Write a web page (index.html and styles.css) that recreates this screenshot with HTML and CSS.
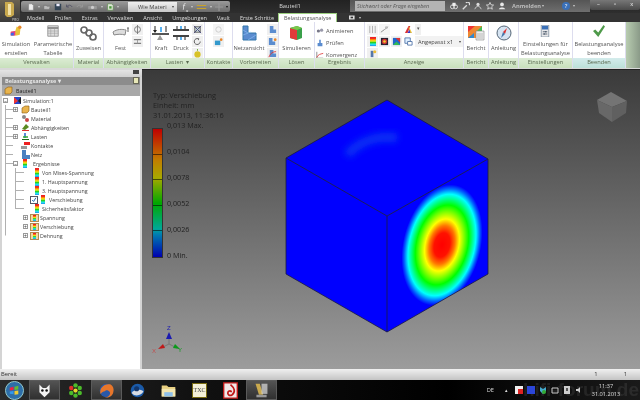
FILE: index.html
```html
<!DOCTYPE html>
<html lang="de">
<head>
<meta charset="utf-8">
<title>Bauteil1</title>
<link rel="stylesheet" href="styles.css">
</head>
<body>
<div class="app">
  <div class="logo"><svg viewBox="0 0 20 22" class="logo-i"><path d="M5 2h7l2 2v11l-3 2H7l-2-2z" fill="#c9a94e"/><path d="M8 4h3v11H8z" fill="#f3e2a8"/></svg><span class="pro">PRO</span></div>

  <header class="titlebar">
    <div class="qat">
      <svg class="q" viewBox="0 0 10 10"><path d="M2 1h4l2 2v6H2z" fill="#eee" stroke="#777" stroke-width=".6"/></svg><i class="dd"></i>
      <svg class="q" viewBox="0 0 10 10"><path d="M1 3h3l1 1h4l-1 4H1z" fill="#bbb" stroke="#666" stroke-width=".6"/></svg>
      <svg class="q" viewBox="0 0 10 10"><path d="M1 1h8v8H1z" fill="#345"/><path d="M3 1h4v3H3z" fill="#eef"/></svg>
      <svg class="q" viewBox="0 0 10 10"><path d="M2 5c2-3 5-3 7 0M2 5V2M2 5h3" fill="none" stroke="#556" stroke-width="1.2"/></svg>
      <svg class="q" viewBox="0 0 10 10"><path d="M8 5C6 2 3 2 1 5M8 5V2M8 5H5" fill="none" stroke="#999" stroke-width="1.2"/></svg>
      <svg class="q q-wide" viewBox="0 0 14 10"><path d="M1 3h12v5H1z" fill="#999" stroke="#777" stroke-width=".6"/><circle cx="7" cy="5.5" r="2" fill="#ccc"/></svg><i class="dd"></i>
      <svg class="q" viewBox="0 0 10 10"><path d="M2 1h5l2 2v6H2z" fill="#dfe8d8" stroke="#5a8a4a" stroke-width=".8"/><path d="M4 4h3v3H4z" fill="#4a9a3a"/></svg><i class="dd"></i>
      <span class="material">Wie Materi<i class="dd dd-dark"></i></span>
      <span class="fx">ƒ<sub>x</sub></span><i class="dd"></i>
      <svg class="q q-wide" viewBox="0 0 14 10"><path d="M1 3h12M1 7h12" stroke="#c9a227" stroke-width="1.4"/></svg><i class="dd"></i>
      <svg class="q" viewBox="0 0 10 10"><path d="M5 0v10M0 5h10" stroke="#999" stroke-width="1.4"/></svg><i class="dd dd-black"></i>
    </div>
    <div class="doc-title">Bauteil1</div>
    <div class="help">
      <span class="search">Stichwort oder Frage eingeben</span>
      <span class="help-ico">
        <svg class="h" viewBox="0 0 10 10"><circle cx="3" cy="6" r="2.4" fill="none" stroke="#eee"/><circle cx="7" cy="6" r="2.4" fill="none" stroke="#eee"/><path d="M3 1h4v4H3z" fill="#eee"/></svg>
        <svg class="h" viewBox="0 0 10 10"><path d="M1 9l5-5M5 1a2.5 2.5 0 0 1 4 3" stroke="#ddd" stroke-width="1.6" fill="none"/></svg>
        <svg class="h" viewBox="0 0 10 10"><circle cx="5" cy="3" r="2" fill="#ddd"/><path d="M1 9c2-5 6-5 8 0" stroke="#ddd" fill="none"/></svg>
        <svg class="h" viewBox="0 0 10 10"><path d="M5 .5l1.3 3 3.2.3-2.4 2.1.8 3.1L5 7.3 2.100 9l.8-3.100L.5 3.800l3.200-.3z" fill="none" stroke="#eee" stroke-width=".9"/></svg>
        <svg class="h" viewBox="0 0 10 10"><circle cx="5" cy="3" r="2.300" fill="#e8e8e8"/><path d="M1 9c1-3 7-3 8 0z" fill="#e8e8e8"/></svg>
      </span>
      <span class="login">Anmelden</span><i class="dd"></i>
      <span class="q-help">?</span><i class="dd"></i>
    </div>
    <div class="winctl"><span>–</span><span>▫</span><span>x</span></div>
  </header>

  <nav class="tabs">
    <span>Modell</span><span>Prüfen</span><span>Extras</span><span>Verwalten</span><span>Ansicht</span><span>Umgebungen</span><span>Vault</span><span>Erste Schritte</span>
    <span class="tab-on">Belastungsanalyse</span>
    <svg class="tab-ico" viewBox="0 0 10 6"><rect width="7" height="5" y=".5" fill="#ddd"/><rect x="2" y="2" width="3" height="2" fill="#333"/></svg><i class="dd"></i>
  </nav>

  <section class="ribbon">
    <div class="panel p-verwalten"><div class="pbody">
      <div class="big b-sim"><svg class="ic" viewBox="0 0 18 16"><path d="M2 14V9l6-1 2-6 5 2-1 9-4 1z" fill="#e8c23a"/><path d="M2 14V9l6-1v6z" fill="#e83a8a"/><path d="M2 14v-3l4-1v4z" fill="#3a6ae8"/><circle cx="14" cy="3" r="2.300" fill="#e8862a"/></svg><span>Simulation<br>erstellen</span></div>
      <div class="big b-par"><svg class="ic" viewBox="0 0 18 16"><path d="M2 1h14v14H2z" fill="#ddd" stroke="#888"/><path d="M2 4h14" stroke="#777" stroke-width="2"/><path d="M6 5v10M11 5v10M2 8h14M2 11h14" stroke="#999" stroke-width=".7"/></svg><span>Parametrische<br>Tabelle</span></div>
    </div><div class="ptitle">Verwalten</div></div>

    <div class="panel p-material"><div class="pbody">
      <div class="big"><svg class="ic" viewBox="0 0 18 16"><g fill="none" stroke="#666" stroke-width="1.700"><circle cx="5" cy="5" r="3"/><circle cx="10" cy="8" r="3"/><circle cx="14" cy="12" r="3"/></g></svg><span>Zuweisen</span></div>
    </div><div class="ptitle">Material</div></div>

    <div class="panel p-abh"><div class="pbody">
      <div class="big b-fest"><svg class="ic" viewBox="0 0 18 16"><path d="M1 7c4-3 9-3 13-2l-1 5c-3-1-7-1-11 0z" fill="#ddd" stroke="#888"/><path d="M15 3h2M16 3v4" stroke="#666"/></svg><span>Fest</span></div>
      <div class="stack">
        <b class="sq"><svg viewBox="0 0 10 10"><circle cx="5" cy="5" r="3.300" fill="none" stroke="#777"/><path d="M5 0v10" stroke="#777"/></svg></b>
        <b class="sq"><svg viewBox="0 0 10 10"><path d="M1 3h8M1 7h8" stroke="#555"/><path d="M5 3v4" stroke="#999"/></svg></b>
      </div>
    </div><div class="ptitle">Abhängigkeiten</div></div>

    <div class="panel p-lasten"><div class="pbody">
      <div class="big b-load"><svg class="ic" viewBox="0 0 18 16"><path d="M3 1v6M14 1v6" stroke="#222"/><path d="M1 5l2 3 2-3z" fill="#222"/><path d="M9 2v5" stroke="#29e" stroke-width="1.500"/><path d="M0 9h17" stroke="#555" stroke-width="2"/><path d="M5 15l3-5 3 5z" fill="#999"/></svg><span>Kraft</span></div>
      <div class="big b-load"><svg class="ic" viewBox="0 0 18 16"><path d="M1 5h16M1 11h16" stroke="#444" stroke-width="2"/><path d="M5 1v3M5 12v3M13 1v3M13 12v3" stroke="#222"/><path d="M9 1v3M9 12v3" stroke="#29e" stroke-width="1.500"/></svg><span>Druck</span></div>
      <div class="stack">
        <b class="sq"><svg viewBox="0 0 10 10"><path d="M2 2h6v6H2z" fill="#cdd" stroke="#555"/><path d="M1 1l8 8M9 1L1 9" stroke="#447"/></svg></b>
        <b class="sq"><svg viewBox="0 0 10 10"><path d="M8 5a3.300 3.300 0 1 1-2-3" fill="none" stroke="#555"/><path d="M5 1l2 1-1 2z" fill="#555"/></svg></b>
        <b class="sq"><svg viewBox="0 0 10 10"><circle cx="5" cy="6" r="3.500" fill="#d8c227"/><path d="M5 2V0" stroke="#6a3"/></svg></b>
      </div>
    </div><div class="ptitle">Lasten &nbsp;▾</div></div>

    <div class="panel p-kontakte"><div class="pbody">
      <div class="stack">
        <b class="sq sq-off"><svg viewBox="0 0 10 10"><circle cx="5" cy="5" r="3" fill="none" stroke="#ccc"/></svg></b>
        <b class="sq"><svg viewBox="0 0 10 10"><path d="M1 4h6v5H1z" fill="#39c"/><circle cx="8" cy="3" r="1.500" fill="#e8862a"/></svg></b>
      </div>
    </div><div class="ptitle">Kontakte</div></div>

    <div class="panel p-vorb"><div class="pbody">
      <div class="big b-netz"><svg class="ic" viewBox="0 0 18 16"><path d="M3 1h5v7h8v7H3z" fill="#5b8ccf" stroke="#37a"/><path d="M3 5l5 3M3 10l8-3M8 15l8-5" stroke="#9cf" stroke-width=".5"/></svg><span>Netzansicht</span></div>
      <div class="stack">
        <b class="sq"><svg viewBox="0 0 10 10"><path d="M2 1h4v4h3v4H2z" fill="#5b8ccf"/></svg></b>
        <b class="sq"><svg viewBox="0 0 10 10"><path d="M1 1h4v4h3v4H1z" fill="#5b8ccf"/><circle cx="8" cy="3" r="1.500" fill="#e8862a"/></svg></b>
        <b class="sq"><svg viewBox="0 0 10 10"><path d="M2 1h4v4h3v4H2z" fill="#5b8ccf"/><path d="M1 9c2-5 5-6 8-6" stroke="#d33" fill="none"/></svg></b>
      </div>
    </div><div class="ptitle">Vorbereiten</div></div>

    <div class="panel p-loesen"><div class="pbody">
      <div class="big"><svg class="ic" viewBox="0 0 18 16"><path d="M3 3l7-2 5 2v10l-5 2-7-2z" fill="#3aa04a"/><path d="M3 3l7 2v10l-7-2z" fill="#e23a3a"/><path d="M3 3l7-2 5 2-5 2z" fill="#7bc84a"/></svg><span>Simulieren</span></div>
    </div><div class="ptitle">Lösen</div></div>

    <div class="panel p-ergebnis"><div class="pbody">
      <ul class="rows">
        <li><svg viewBox="0 0 10 10"><circle cx="3" cy="5" r="2" fill="#778"/><circle cx="7" cy="4" r="2" fill="#99a"/></svg>Animieren</li>
        <li><svg viewBox="0 0 10 10"><path d="M4 1h2v4h2v4H2V5h2z" fill="#5b8ccf"/></svg>Prüfen</li>
        <li><svg viewBox="0 0 10 10"><path d="M1 1v8h8" stroke="#777" fill="none"/><path d="M1 8c2-4 4-4 8-5" stroke="#d33" fill="none"/></svg>Konvergenz</li>
      </ul>
    </div><div class="ptitle">Ergebnis</div></div>

    <div class="panel p-anzeige"><div class="pbody">
      <div class="azgrid">
        <b class="sq sq-off"><svg viewBox="0 0 10 10"><path d="M2 1v8M5 1v8M8 1v8" stroke="#aaa"/></svg></b>
        <b class="sq sq-off"><svg viewBox="0 0 10 10"><path d="M1 8l4-3 4-3" stroke="#888"/><circle cx="7" cy="3" r="1.500" fill="#bbb"/></svg></b>
        <span class="gap"></span>
        <b class="sq sq-plain"><svg viewBox="0 0 10 10"><path d="M1 9l4-8h2l-3 8z" fill="#d33"/><path d="M5 1l4 8H6z" fill="#e8c23a"/><path d="M4 9l2-4 1 4z" fill="#33c"/></svg></b>
        <b class="sq sq-tiny">▾</b>
        <span class="gap gap2"></span>
        <b class="sq"><i class="rb rb-wide"></i></b>
        <b class="sq"><svg viewBox="0 0 10 10"><path d="M1 1h8v8H1z" fill="#223"/><circle cx="5" cy="5" r="3" fill="#c33"/><circle cx="5" cy="5" r="1.500" fill="#ec3"/></svg></b>
        <b class="sq"><svg viewBox="0 0 10 10"><path d="M1 1h8v8H1z" fill="#26c"/><path d="M4 1h5v5z" fill="#d33"/><path d="M1 9l4-4 4 4z" fill="#3b5"/></svg></b>
        <b class="sq sq-plain"><svg viewBox="0 0 10 10"><path d="M1 1h6v6H1z" fill="#def" stroke="#57a"/><path d="M4 5h5v4H4z" fill="#fff" stroke="#57a"/></svg></b>
        <span class="combo">Angepasst x1<i class="dd dd-dark"></i></span>
        <b class="sq"><svg viewBox="0 0 10 10"><path d="M3 2h3v7H3z" fill="#57a"/><circle cx="7.500" cy="3" r="1.700" fill="#eb3"/></svg></b>
      </div>
    </div><div class="ptitle">Anzeige</div></div>

    <div class="panel p-bericht"><div class="pbody">
      <div class="big"><svg class="ic" viewBox="0 0 18 16"><path d="M1 1h14v12H1z" fill="#e83"/><path d="M1 1h7l-7 6z" fill="#e33"/><path d="M15 1v6H9z" fill="#4b5"/><path d="M1 13l6-5v5z" fill="#38c"/><path d="M9 6h8v9H9z" fill="#eee" stroke="#888" stroke-width=".6"/><path d="M10 9h6M10 11h6M10 13h6" stroke="#999" stroke-width=".6"/></svg><span>Bericht</span></div>
    </div><div class="ptitle">Bericht</div></div>

    <div class="panel p-anleitung"><div class="pbody">
      <div class="big"><svg class="ic" viewBox="0 0 18 16"><circle cx="9" cy="8" r="7" fill="#d6e4f2" stroke="#567"/><path d="M12 3L8 7l2 2z" fill="#d33"/><path d="M6 13l2-6 2 2z" fill="#47a"/></svg><span>Anleitung</span></div>
    </div><div class="ptitle">Anleitung</div></div>

    <div class="panel p-einst"><div class="pbody">
      <div class="big"><svg class="ic" viewBox="0 0 18 16"><path d="M4 0h10v16H4z" fill="#e8e8ea" stroke="#789"/><path d="M5 1h8v5H5z" fill="#3a70b8"/><path d="M6 9h6M6 12h6" stroke="#345"/><path d="M10 8v2M8 11v2" stroke="#345"/></svg><span>Einstellungen für<br>Belastungsanalyse</span></div>
    </div><div class="ptitle">Einstellungen</div></div>

    <div class="panel p-beenden"><div class="pbody">
      <div class="big"><svg class="ic" viewBox="0 0 18 16"><path d="M1 8l3-2 4 4 7-10 2 2-9 14z" fill="#4f9a4a"/></svg><span>Belastungsanalyse<br>beenden</span></div>
    </div><div class="ptitle ptitle-end">Beenden</div></div>

    <div class="ribbon-rest"></div>
  </section>
  <div class="rule"></div>

  <main class="main">
    <aside class="side">
      <div class="side-strip"><b class="side-btn"></b></div>
      <div class="side-head">Belastungsanalyse ▾<b class="side-ico"></b></div>
      <div class="side-root"><svg class="ti" viewBox="0 0 9 9"><path d="M1 3l3-2h4v5L6 8H1z" fill="#e9b44c" stroke="#8a5a10" stroke-width=".6"/></svg>Bauteil1</div>
      <ul class="tree">
        <li class="r l0"><i class="box">–</i><svg class="ti" viewBox="0 0 9 9"><path d="M1 1h7v7H1z" fill="#24c"/><path d="M1 1l4 4-4 3z" fill="#e33"/><path d="M8 1L5 5l3 3z" fill="#222"/></svg>Simulation:1</li>
        <li class="r l1"><i class="box">+</i><svg class="ti" viewBox="0 0 9 9"><path d="M1 3l3-2h4v5L6 8H1z" fill="#e9b44c" stroke="#8a5a10" stroke-width=".6"/></svg>Bauteil1</li>
        <li class="r l1 noplus"><svg class="ti" viewBox="0 0 9 9"><circle cx="3" cy="3" r="2" fill="#888"/><circle cx="6" cy="6" r="2" fill="#c44"/></svg>Material</li>
        <li class="r l1"><i class="box">+</i><svg class="ti" viewBox="0 0 9 9"><path d="M1 6l4-5 3 3-4 3z" fill="#5a8a20"/><path d="M1 7h7v1H1z" fill="#d33"/></svg>Abhängigkeiten</li>
        <li class="r l1"><i class="box">+</i><svg class="ti" viewBox="0 0 9 9"><path d="M1 7h7v1H1z" fill="#1a6a1a"/><path d="M4 1v5" stroke="#26c" stroke-width="1.500"/><path d="M2 5h5" stroke="#3a3" stroke-width="1.500"/></svg>Lasten</li>
        <li class="r l1 noplus"><svg class="ti" viewBox="0 0 9 9"><path d="M3 1h6v3H3z" fill="#e22"/><path d="M0 5h6v3H0z" fill="#999"/></svg>Kontakte</li>
        <li class="r l1 noplus"><svg class="ti" viewBox="0 0 9 9"><path d="M1 0h4v5h4v4H1z" fill="#4a80c0"/></svg>Netz</li>
        <li class="r l1 open"><i class="box">–</i><i class="rb"></i>Ergebnisse</li>
        <li class="r l2"><i class="rb"></i>Von Mises-Spannung</li>
        <li class="r l2"><i class="rb"></i>1. Hauptspannung</li>
        <li class="r l2"><i class="rb"></i>3. Hauptspannung</li>
        <li class="r l2 checked"><i class="chk"><svg viewBox="0 0 8 8"><path d="M1.500 4l2 2 3-5" fill="none" stroke="#26a" stroke-width="1.300"/></svg></i><i class="rb"></i>Verschiebung</li>
        <li class="r l2 last"><i class="rb"></i>Sicherheitsfaktor</li>
        <li class="r l3"><i class="box">+</i><i class="fold"><i class="rb rb-mini"></i></i>Spannung</li>
        <li class="r l3"><i class="box">+</i><i class="fold"><i class="rb rb-mini"></i></i>Verschiebung</li>
        <li class="r l3 end"><i class="box">+</i><i class="fold"><i class="rb rb-mini"></i></i>Dehnung</li>
      </ul>
    </aside>

    <div class="view">
      <svg class="scene" viewBox="0 0 498 299">
        <defs>
          <radialGradient id="heat" gradientUnits="userSpaceOnUse" cx="0" cy="0" r="44" gradientTransform="matrix(.92 -.3 0 1.340 442 245)">
            <stop offset="0" stop-color="#f00"/><stop offset=".2" stop-color="#f10"/><stop offset=".32" stop-color="#f70"/><stop offset=".43" stop-color="#ff0"/><stop offset=".66" stop-color="#0f0"/><stop offset=".84" stop-color="#0ff"/><stop offset=".93" stop-color="#06f"/><stop offset="1" stop-color="#00f"/>
          </radialGradient>
          <filter id="soft" x="-50%" y="-50%" width="200%" height="200%"><feGaussianBlur stdDeviation="3.500"/></filter>
        </defs>
        <g transform="translate(-142 -70)">
          <path d="M387 100L488 159 387 216 286 158z" fill="#00f"/>
          <path d="M347 155C358 143 375 135 397 138" fill="none" stroke="#0a40f0" stroke-width="9" opacity=".8" filter="url(#soft)"/>
          <path d="M286 158L387 216V332L286 274z" fill="#00f"/>
          <path d="M387 216L488 159V274L387 332z" fill="url(#heat)"/>
          <path d="M387 100L488 159V274L387 332 286 274V158zM286 158L387 216 488 159M387 216V332" fill="none" stroke="#1a1a40" stroke-width=".8"/>
          <path d="M611 92L627 101 612 107 597 100z" fill="#747474"/>
          <path d="M597 100L612 107V122L599 113z" fill="#686868"/>
          <path d="M627 101L626 113 612 122V107z" fill="#606060"/>
          <path d="M169 344V336M169 344L161 348M169 344L177 348" stroke="#777" stroke-width="1"/>
          <path d="M169 332l3 7h-6z" fill="#1a1ab0"/>
          <path d="M158 349l5-5 2 4z" fill="#c01818"/>
          <path d="M180 349l-5-5-2 4z" fill="#0a9a1a"/>
        </g>
        <text class="tri tri-z" x="25" y="260">Z</text>
        <text class="tri tri-x" x="10" y="283">X</text>
        <text class="tri tri-y" x="36" y="282">Y</text>
      </svg>
      <div class="legend">
        <div class="leg-head">Typ: Verschiebung<br>Einheit: mm<br>31.01.2013, 11:36:16</div>
        <div class="leg-body">
          <div class="leg-bar"><i></i><i></i><i></i><i></i><i></i></div>
          <div class="leg-labels"><span>0,013 Max.</span><span>0,0104</span><span>0,0078</span><span>0,0052</span><span>0,0026</span><span>0 Min.</span></div>
        </div>
      </div>
    </div>
  </main>

  <div class="status"><span>Bereit</span><span class="st-r"><span>1</span><span>1</span></span></div>

  <footer class="taskbar">
    <div class="tb-icons">
      <b class="tb tb-orb"><svg viewBox="0 0 20 20"><circle cx="10" cy="10" r="9.500" fill="#2d6ea8"/><circle cx="10" cy="10" r="9.500" fill="none" stroke="#9cc"/><path d="M5 7l4-1v3.500l-4 .5z" fill="#e24"/><path d="M10 6l4-1v4l-4 .5z" fill="#6b3"/><path d="M5 11l4-.5V14l-4-.5z" fill="#39e"/><path d="M10 10.500l4-.5v4l-4 .5z" fill="#ec3"/></svg></b>
      <b class="tb tb-on"><svg viewBox="0 0 20 20"><path d="M4 3l4 4h4l4-4v9l-6 6-6-6z" fill="#f4f4f4"/><circle cx="7.500" cy="10" r="1.500" fill="#111"/><circle cx="12.500" cy="10" r="1.500" fill="#111"/></svg></b>
      <b class="tb"><svg viewBox="0 0 20 20"><g fill="#4cbb2a"><circle cx="10" cy="4" r="2.600"/><circle cx="15" cy="7" r="2.600"/><circle cx="15" cy="13" r="2.600"/><circle cx="10" cy="16" r="2.600"/><circle cx="5" cy="13" r="2.600"/></g><circle cx="5" cy="7" r="2.600" fill="#e0302a"/><circle cx="10" cy="10" r="2.500" fill="#e8d82a"/></svg></b>
      <b class="tb tb-on"><svg viewBox="0 0 20 20"><circle cx="10" cy="10" r="8" fill="#2a58a8"/><path d="M3 14C1 7 8 1 15 3c3 2 4 5 3 9-1 5-6 7-10 6 4 0 7-3 6-6-2-3-5-3-6-1-2 0-3 1-5 3z" fill="#e8762a"/></svg></b>
      <b class="tb"><svg viewBox="0 0 20 20"><circle cx="10" cy="10" r="8" fill="#1a5aa8"/><path d="M3 13c3-4 9-5 14-2-2 5-10 7-14 2z" fill="#d8dce4"/><circle cx="9" cy="8" r="3" fill="#12356a"/></svg></b>
      <b class="tb"><svg viewBox="0 0 20 20"><path d="M2 4h6l2 2h8v11H2z" fill="#e8cf80"/><path d="M2 8h16v9H2z" fill="#f4e7b0"/><path d="M5 12h10v5H5z" fill="#8fc0e8"/></svg></b>
      <b class="tb"><span class="txc">TXC</span></b>
      <b class="tb"><svg viewBox="0 0 20 20"><path d="M2 1h16v18H2z" fill="#f0e8e8" stroke="#c01818" stroke-width="1.600"/><path d="M10 3c5 4 6 9 2 12-3 2-6 0-5-3 1-2 4-2 4 0" fill="none" stroke="#c01818" stroke-width="2"/></svg></b>
      <b class="tb tb-on"><svg viewBox="0 0 20 20"><path d="M3 2h5l4 13H7z" fill="#c9a94e"/><path d="M10 2h7v12h-7z" fill="#ddd" opacity=".7"/><path d="M4 15h12v3H4z" fill="#999"/></svg></b>
    </div>
    <div class="tray">
      <span class="lang">DE</span><span class="arrow">▴</span>
      <svg class="ty" viewBox="0 0 8 8"><rect width="8" height="8" fill="#eee"/><rect x="3" y="3" width="5" height="5" fill="#d22"/></svg>
      <svg class="ty" viewBox="0 0 8 8"><rect width="8" height="8" fill="#2c46d8"/></svg>
      <svg class="ty" viewBox="0 0 8 8"><path d="M1 1l3 2 3-2v4L4 8 1 5z" fill="#4ac"/><circle cx="5" cy="6" r="2" fill="#3a3"/></svg>
      <svg class="ty" viewBox="0 0 8 8"><path d="M1 2h6v5H1z" fill="none" stroke="#ccc"/></svg>
      <svg class="ty" viewBox="0 0 8 8"><path d="M1 0h6v8H1z" fill="#ccc"/><path d="M3 2h2v3H3z" fill="#555"/></svg>
      <svg class="ty" viewBox="0 0 8 8"><path d="M1 3h2l2-2v6L3 5H1z" fill="#ccc"/></svg>
      <span class="clock">11:37<br>31.01.2013</span>
    </div>
    <span class="watermark">hifi-forum.de</span>
  </footer>
</div>
</body>
</html>
```

FILE: styles.css
```css
* { box-sizing: border-box; }
html, body { margin: 0; padding: 0; background: #000; }
i, b { font-style: normal; font-weight: normal; display: block; }
ul { list-style: none; margin: 0; padding: 0; }
svg { display: block; }

.app {
  position: relative;
  width: 640px;
  height: 400px;
  overflow: hidden;
  display: flex;
  flex-direction: column;
  font: 5.700px/8px "Open Sans", sans-serif;
  color: #555;
  filter: blur(.3px);
}

.logo {
  position: absolute;
  left: 0;
  top: 0;
  width: 20px;
  height: 22px;
  background: linear-gradient(#6a6252, #3a3a3a);
}
.logo-i { width: 20px; height: 22px; }
.pro {
  position: absolute;
  right: 1px;
  bottom: 0;
  font-size: 3.500px;
  line-height: 4px;
  color: #ccc;
}

.titlebar {
  height: 13px;
  flex: none;
  display: flex;
  background: linear-gradient(#222, #2e2e2e);
  padding-left: 21px;
}
.qat {
  width: 209px;
  height: 11px;
  margin-top: 1px;
  display: flex;
  align-items: center;
  gap: 3px;
  padding-left: 6px;
  background: linear-gradient(#9a9a9a, #6c6c6c);
  border-radius: 2px;
}
.q { width: 8px; height: 8px; flex: none; }
.q-wide { width: 11px; }
.dd {
  flex: none;
  width: 0;
  height: 0;
  border-left: 1.500px solid transparent;
  border-right: 1.500px solid transparent;
  border-top: 2px solid #ccc;
}
.dd-dark { border-top-color: #444; }
.dd-black { border-top-color: #111; }
.material {
  width: 49px;
  height: 10px;
  margin-left: 6px;
  display: flex;
  align-items: center;
  justify-content: space-between;
  padding: 0 3px 0 10px;
  background: linear-gradient(#f0f0f0, #c8c8c8);
  color: #444;
  flex: none;
}
.fx { color: #eee; font: italic 8px/8px "Liberation Serif", serif; margin-left: 2px; }
.fx sub { font-size: 5px; line-height: 0; }
.doc-title {
  width: 120px;
  text-align: center;
  color: #d8d8d8;
  line-height: 13px;
  flex: none;
}
.help {
  width: 240px;
  height: 12px;
  flex: none;
  display: flex;
  align-items: center;
  background: linear-gradient(#555, #6e6e6e);
  padding-left: 5px;
  gap: 3px;
}
.search {
  width: 90px;
  height: 10px;
  flex: none;
  background: #b4b4b4;
  color: #555;
  font-style: italic;
  font-size: 5.400px;
  line-height: 10px;
  padding-left: 2px;
  white-space: nowrap;
}
.help-ico { display: flex; gap: 4px; margin-left: 2px; }
.h { width: 8px; height: 8px; }
.login { color: #bbb; font-weight: 700; margin-left: 3px; width: 27px; }
.q-help {
  width: 8px;
  height: 8px;
  margin-left: 15px;
  border-radius: 50%;
  background: #3a70b8;
  color: #fff;
  font-size: 6px;
  text-align: center;
}
.winctl {
  flex: 1;
  display: flex;
  height: 10px;
  background: linear-gradient(#777, #4a4a4a);
  border-radius: 0 0 2px 2px;
}
.winctl span { flex: 1; text-align: center; color: #eee; line-height: 9px; }

.tabs {
  height: 9px;
  flex: none;
  display: flex;
  align-items: center;
  gap: 10px;
  padding-left: 27px;
  background: #333;
  color: #ddd;
}
.tabs span { font-size: 5.500px; }
.tabs .tab-on {
  margin-left: -6px;
  height: 9px;
  padding: 0 5px;
  background: #fff;
  color: #555;
  border: 1px solid #9ccf80;
  border-bottom: 0;
  line-height: 8px;
}
.tab-ico { width: 8px; height: 5px; margin-left: 2px; }
.tabs .dd { margin-left: -8px; }

.ribbon { height: 46px; flex: none; display: flex; background: #fff; }
.rule {
  height: 2px;
  flex: none;
  background: linear-gradient(#222, #222) 142px 1px / 100% 1px no-repeat, #d8d8d8;
}
.panel {
  flex: none;
  display: flex;
  flex-direction: column;
  border-right: 1px solid #dde;
}
.pbody {
  flex: 1;
  display: flex;
  justify-content: center;
  gap: 2px;
  padding-top: 2px;
  min-height: 0;
}
.ptitle {
  height: 10px;
  flex: none;
  text-align: center;
  line-height: 9px;
  color: #5a6a50;
  background: linear-gradient(#dcecd4, #c8e0bc);
  white-space: nowrap;
}
.ptitle-end { background: linear-gradient(#d4ecec, #bce0d8); }
.p-verwalten { width: 74px; }
.p-material { width: 30px; }
.p-abh { width: 47px; }
.p-lasten { width: 54px; }
.p-kontakte { width: 28px; }
.p-vorb { width: 46px; }
.p-loesen { width: 36px; }
.p-ergebnis { width: 50px; }
.p-anzeige { width: 99px; }
.p-bericht { width: 25px; }
.p-anleitung { width: 30px; }
.p-einst { width: 54px; }
.p-beenden { width: 53px; }
.ribbon-rest { flex: 1; background: linear-gradient(90deg, #b8ccb0, #8a9a88); }

.big {
  display: flex;
  flex-direction: column;
  align-items: center;
  text-align: center;
  white-space: nowrap;
}
.big span { margin-top: 3px; line-height: 9px; }
.ic { width: 18px; height: 16px; margin-top: 1px; }
.b-sim { width: 31px; }
.b-par { width: 39px; }
.stack { display: flex; flex-direction: column; gap: 1px; }
.sq {
  width: 11px;
  height: 11px;
  padding: 1px;
  background: #f0f0f0;
  flex: none;
}
.sq-off { background: #f4f4f4; }
.sq-plain { background: none; }
.sq-tiny { width: 6px; font-size: 5px; line-height: 9px; padding: 0; text-align: center; }
.rows { width: 47px; padding-top: 1px; }
.rows li { display: flex; align-items: center; gap: 2px; height: 12px; white-space: nowrap; }
.rows svg { width: 8px; height: 8px; flex: none; }
.azgrid { display: flex; flex-wrap: wrap; width: 98px; gap: 1px; align-content: flex-start; padding-left: 2px; }
.gap { width: 11px; }
.gap2 { width: 40px; }
.combo {
  width: 48px;
  height: 11px;
  padding: 0 2px 0 3px;
  display: flex;
  align-items: center;
  justify-content: space-between;
  background: #f2f2f2;
  color: #444;
  white-space: nowrap;
}

.rb {
  flex: none;
  width: 4px;
  height: 9px;
  background: linear-gradient(#e22 0, #e22 15%, #f90 30%, #ee2 45%, #2c2 62%, #2ee 80%, #28e 100%);
}
.rb-wide { width: 6px; height: 9px; margin: 0 auto; }
.rb-mini { width: 3px; height: 6px; margin: 0 auto; }

.main { flex: 1; display: flex; min-height: 0; background: #bbb; }
.side {
  width: 142px;
  flex: none;
  display: flex;
  flex-direction: column;
  background: #d4d4d4;
  padding: 0 2px;
}
.side-strip { height: 7px; flex: none; position: relative; margin: 0 -2px; background: linear-gradient(#e4e4e4, #d0d0d0); }
.side-btn { position: absolute; right: 3px; top: 0; width: 6px; height: 4px; background: #444; }
.side-head {
  height: 8px;
  flex: none;
  display: flex;
  justify-content: space-between;
  padding-left: 3px;
  background: #8c8c8c;
  color: #e8e8e8;
  font-weight: 700;
  font-size: 5.500px;
}
.side-ico { width: 6px; height: 7px; background: #e8e8b8; border: 1px solid #665; margin-right: 1px; }
.side-root {
  height: 11px;
  flex: none;
  display: flex;
  align-items: center;
  gap: 2px;
  padding-left: 2px;
  background: #a8a8a8;
  color: #222;
  font-size: 5.400px;
}
.tree { flex: 1; background: #fff; color: #444; font-size: 5.300px; }
.r {
  height: 9px;
  display: flex;
  align-items: center;
  white-space: nowrap;
  --line: #b0b0b0;
  background-repeat: no-repeat;
}
.ti { width: 9px; height: 9px; flex: none; margin-right: 1px; }
.box {
  flex: none;
  width: 5px;
  height: 5px;
  font-size: 5px;
  line-height: 4px;
  text-align: center;
  border: 1px solid #999;
  background: #fff;
  color: #333;
  margin-right: 2px;
}
.l0 { padding-left: 1px; }
.l0 .box { margin-right: 5px; }
.l1 {
  padding-left: 11px;
  background-image: linear-gradient(var(--line), var(--line)), linear-gradient(var(--line), var(--line));
  background-size: 1px 100%, 8px 1px;
  background-position: 3px 0, 3px 50%;
}
.l1 .box { margin-right: 3px; }
.noplus { padding-left: 19px; }
.open { padding-left: 11px; }
.open .rb { margin-left: 2px; margin-right: 6px; }
.l2 {
  padding-left: 33px;
  background-image: linear-gradient(var(--line), var(--line)), linear-gradient(var(--line), var(--line)), linear-gradient(var(--line), var(--line));
  background-size: 1px 100%, 1px 100%, 9px 1px;
  background-position: 3px 0, 13px 0, 13px 50%;
}
.l2 .rb { margin-right: 3px; }
.checked { padding-left: 28px; }
.checked .rb { margin-left: 3px; margin-right: 4px; }
.last { background-size: 1px 100%, 1px 50%, 9px 1px; }
.chk { width: 8px; height: 8px; border: 1px solid #556; background: #fff; flex: none; }
.chk svg { width: 6px; height: 6px; }
.l3 {
  padding-left: 21px;
  background-image: linear-gradient(var(--line), var(--line));
  background-size: 1px 100%;
  background-position: 3px 0;
}
.end { background-size: 1px 50%; }
.fold {
  width: 9px;
  height: 8px;
  margin-right: 1px;
  flex: none;
  background: #efd9a8;
  border: 1px solid #b08a50;
}

.view {
  flex: 1;
  position: relative;
  background: linear-gradient(#3a3a3a, #9c9c9c);
}
.scene { position: absolute; left: 0; top: 0; width: 498px; height: 299px; }
.tri { font: 6px "Liberation Sans", sans-serif; }
.tri-z { fill: #1a1ab0; }
.tri-x { fill: #c05050; }
.tri-y { fill: #0a9a1a; }

.legend {
  position: absolute;
  left: 10px;
  top: 20px;
  color: #222;
  font: 7.400px/10px "Open Sans", sans-serif;
  white-space: nowrap;
}
.leg-head { margin-left: 1px; }
.leg-body { display: flex; gap: 4px; margin-top: 8px; }
.leg-bar {
  width: 11px;
  height: 130px;
  border: 1px solid #333;
  display: flex;
  flex-direction: column;
  background: linear-gradient(#c00000 0, #c08000 25%, #a8a800 38%, #00a800 58%, #00a898 78%, #0080b0 82%, #0000b0 100%);
}
.leg-bar i { height: 26px; border-bottom: 1px solid rgba(0,0,0,.55); }
.leg-bar i:last-child { border-bottom: 0; }
.leg-labels {
  height: 140px;
  margin-top: -8px;
  display: flex;
  flex-direction: column;
  justify-content: space-between;
  font-size: 7.200px;
}

.status {
  height: 11px;
  flex: none;
  display: flex;
  justify-content: space-between;
  padding: 1px 13px 0 1px;
  background: linear-gradient(#f0f0f0, #c4c4c4);
  color: #333;
  font-size: 5.800px;
}
.st-r { display: flex; gap: 26px; }

.taskbar {
  height: 20px;
  flex: none;
  position: relative;
  display: flex;
  justify-content: space-between;
  background: linear-gradient(90deg, #2a2a2a, #111 30%, #000 70%, #1a1a1a);
}
.tb-icons { display: flex; }
.tb {
  width: 31px;
  height: 20px;
  display: flex;
  align-items: center;
  justify-content: center;
}
.tb-orb { width: 29px; }
.tb svg { width: 17px; height: 17px; }
.tb-orb svg { width: 19px; height: 19px; }
.tb-on { background: linear-gradient(#555, #2e2e2e); box-shadow: inset 0 0 0 1px #5a5a5a; }
.txc {
  width: 15px;
  height: 15px;
  display: block;
  background: #f4f0d8;
  border: 1.500px solid #776a10;
  color: #444;
  font: 6px/12px "Liberation Serif", serif;
  text-align: center;
}
.tray { display: flex; align-items: center; gap: 4px; padding-right: 15px; color: #ddd; position: relative; z-index: 1; }
.lang { margin-right: 7px; }
.arrow { font-size: 5px; margin-right: 3px; }
.ty { width: 8px; height: 8px; }
.clock { width: 38px; margin-left: 0; text-align: center; font-size: 5.600px; line-height: 8px; }
.watermark {
  position: absolute;
  right: 1px;
  top: 0;
  font: 700 19px/20px "Liberation Sans", sans-serif;
  color: rgba(255,255,255,.08);
  white-space: nowrap;
}
```
